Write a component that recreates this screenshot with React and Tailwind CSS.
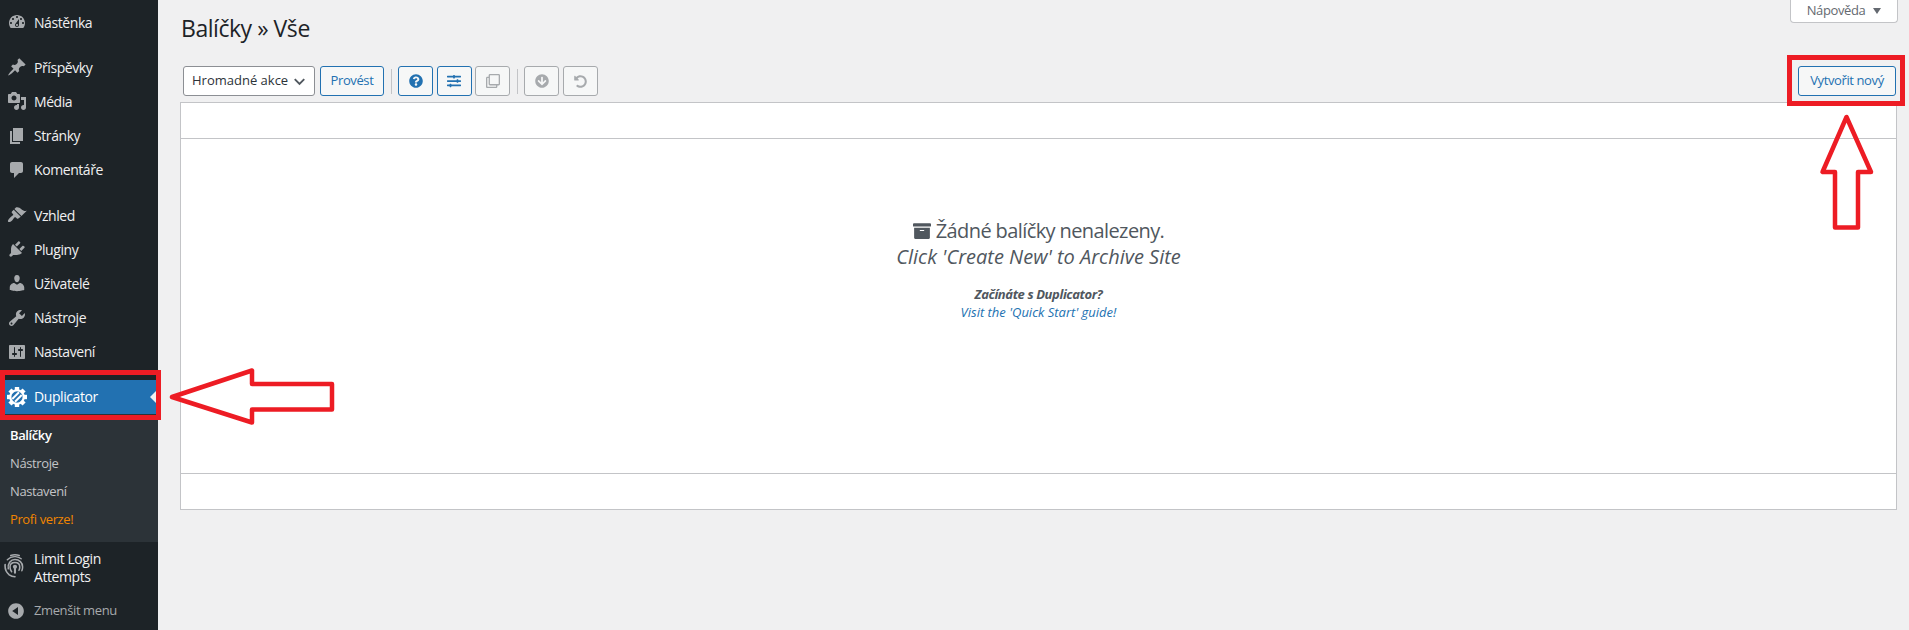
import React from "react";
import { FaQuestionCircle, FaSlidersH, FaRegClone, FaArrowCircleDown, FaUndoAlt, FaArchive } from "react-icons/fa";

const P = {
  dashboard: "M3.76 16h12.48c1.1-1.37 1.76-3.11 1.76-5 0-4.42-3.58-8-8-8s-8 3.58-8 8c0 1.89.66 3.63 1.76 5zM10 4c.55 0 1 .45 1 1s-.45 1-1 1-1-.45-1-1 .45-1 1-1zM6 6c.55 0 1 .45 1 1s-.45 1-1 1-1-.45-1-1 .45-1 1-1zm8 0c.55 0 1 .45 1 1s-.45 1-1 1-1-.45-1-1 .45-1 1-1zm-5.37 5.55L12 7v6c0 1.1-.9 2-2 2s-2-.9-2-2c0-.57.24-1.08.63-1.45zM4 10c.55 0 1 .45 1 1s-.45 1-1 1-1-.45-1-1 .45-1 1-1zm12 0c.55 0 1 .45 1 1s-.45 1-1 1-1-.45-1-1 .45-1 1-1zm-5 3c0-.55-.45-1-1-1s-1 .45-1 1 .45 1 1 1 1-.45 1-1z",
  post: "M10.44 3.02l1.82-1.82 6.36 6.35-1.83 1.82c-1.05-.68-2.48-.57-3.41.36l-.75.75c-.92.93-1.04 2.35-.35 3.41l-1.83 1.82-2.41-2.41-2.8 2.79c-.42.42-3.38 2.71-3.8 2.29s1.86-3.39 2.28-3.81l2.79-2.79L4.1 9.36l1.83-1.82c1.05.69 2.48.57 3.4-.36l.75-.75c.93-.92 1.05-2.35.36-3.41z",
  media: "M13 11V4c0-.55-.45-1-1-1h-1.67L9 1H5L3.67 3H2c-.55 0-1 .45-1 1v7c0 .55.45 1 1 1h10c.55 0 1-.45 1-1zM7 4.5c1.38 0 2.5 1.12 2.5 2.5S8.38 9.5 7 9.5 4.5 8.38 4.5 7 5.62 4.5 7 4.5zM14 6h5v10.5c0 1.38-1.12 2.5-2.5 2.5S14 17.88 14 16.5s1.12-2.5 2.5-2.5c.17 0 .34.02.5.05V9h-3V6zm-4 8.05V13h2v3.5c0 1.38-1.12 2.5-2.5 2.5S7 17.88 7 16.5 8.12 14 9.5 14c.17 0 .34.02.5.05z",
  page: "M6 15V2h10v13H6zm-1 1h8v2H3V5h2v11z",
  comments: "M5 2h9c1.1 0 2 .9 2 2v7c0 1.1-.9 2-2 2h-2l-5 5v-5H5c-1.1 0-2-.9-2-2V4c0-1.1.9-2 2-2z",
  appearance: "M14.48 11.06L7.41 3.99l1.5-1.5c.5-.56 2.3-.47 3.51.32 1.21.8 1.43 1.28 2.91 2.1 1.18.64 2.45 1.26 4.45.85zM13.77 11.77 6.7 4.7 4.93 6.47c-.39.39-.39 1.02 0 1.41l1.06 1.06c.39.39.39 1.03 0 1.42-.6.6-1.43 1.11-2.21 1.69-.35.26-.7.53-1.01.84-1.34 1.34-2.37 3.09-1.67 3.79.7.7 2.45.33 3.79-1.01.31-.31.58-.66.84-1.01.58-.78 1.09-1.61 1.69-2.21.39-.39 1.03-.39 1.42 0l1.06 1.06c.39.39 1.02.39 1.41 0z",
  plugins: "M13.11 4.36L9.87 7.6 8 5.73l3.24-3.24c.35-.34 1.05-.2 1.56.32.52.51.66 1.21.31 1.55zm-8 1.77l.91-1.12 9.01 9.01-1.19.84c-.71.71-2.63 1.16-3.82 1.16H6.14L4.9 17.26c-.59.59-1.54.59-2.12 0-.59-.58-.59-1.53 0-2.12l1.24-1.24v-3.88c0-1.13.4-3.19 1.09-3.89zm7.26 3.97l3.24-3.24c.34-.35 1.04-.21 1.55.31.52.51.66 1.21.31 1.55l-3.24 3.25z",
  users: "M10 9.25c-2.27 0-2.73-3.44-2.73-3.44C7 4.02 7.82 2 9.97 2c2.16 0 2.98 2.02 2.71 3.81 0 0-.41 3.44-2.68 3.44zm0 2.57L12.72 10c2.39 0 4.52 2.33 4.52 4.53v2.49s-3.65 1.13-7.24 1.13c-3.65 0-7.24-1.13-7.24-1.13v-2.49c0-2.25 1.94-4.48 4.47-4.48z",
  tools: "M16.68 9.77c-1.34 1.34-3.3 1.67-4.95.99l-5.41 6.52c-.99.99-2.59.99-3.58 0s-.99-2.59 0-3.57l6.52-5.42c-.68-1.65-.35-3.61.99-4.95 1.28-1.28 3.12-1.62 4.72-1.06l-2.89 2.89 2.82 2.82 2.86-2.87c.53 1.58.18 3.39-1.08 4.65zM3.81 16.21c.4.39 1.04.39 1.43 0 .4-.4.4-1.04 0-1.43-.39-.4-1.03-.4-1.43 0-.39.39-.39 1.03 0 1.43z",
  settings: "M18 16V4c0-.55-.45-1-1-1H3c-.55 0-1 .45-1 1v12c0 .55.45 1 1 1h14c.55 0 1-.45 1-1zM8 11h1c.55 0 1 .45 1 1s-.45 1-1 1H8v1.5c0 .28-.22.5-.5.5s-.5-.22-.5-.5V13H6c-.55 0-1-.45-1-1s.45-1 1-1h1V5.5c0-.28.22-.5.5-.5s.5.22.5.5V11zm5-2h-1c-.55 0-1-.45-1-1s.45-1 1-1h1V5.5c0-.28.22-.5.5-.5s.5.22.5.5V7h1c.55 0 1 .45 1 1s-.45 1-1 1h-1v5.5c0 .28-.22.5-.5.5s-.5-.22-.5-.5V9z",
  collapse: "M10 2.16c4.33 0 7.84 3.51 7.84 7.84s-3.51 7.84-7.84 7.84S2.16 14.33 2.16 10 5.71 2.16 10 2.16zm2 11.72V6.12L6.18 9.97z",
};

function Dash({ d }) {
  return (
    <svg viewBox="0 0 20 20" className="w-5 h-5 fill-[#a7aaad] shrink-0">
      <path d={d} />
    </svg>
  );
}

function Gear() {
  const teeth = [0, 45, 90, 135, 180, 225, 270, 315];
  return (
    <svg viewBox="0 0 22 22" className="w-[20px] h-[20px] shrink-0">
      {teeth.map((a) => (
        <rect key={a} x="8.6" y="0" width="4.8" height="4.5" fill="#fff" transform={`rotate(${a} 11 11)`} />
      ))}
      <circle cx="11" cy="11" r="7.4" fill="none" stroke="#fff" strokeWidth="2.4" />
      <path d="M5.8 13.2 13.2 5.800M8.800 16.200 16.200 8.800" stroke="#fff" strokeWidth="2.2" />
    </svg>
  );
}

function Finger() {
  return (
    <svg viewBox="0 0 22 26" className="w-[21px] h-[25px] shrink-0" fill="none" stroke="#a7aaad" strokeLinecap="round">
      <path d="M7 2.500C10 1.500 13 1.500 16 2.500" strokeWidth="1.500" />
      <path d="M3.500 7C6 4.500 9 3.500 12 3.700c2.500.2 4.500 1 6 2.300" strokeWidth="1.500" />
      <path d="M1.200 12C.8 16 2 20 5.500 22.800c1.500 1 3.500 1.800 6 2" strokeWidth="1.700" />
      <path d="M4.500 16.500C3.500 11 7 6.700 11.500 6.700S19.500 10 19.500 14.500c0 1.500-.3 2.800-.8 4" strokeWidth="1.600" />
      <path d="M8 19.500c-1.200-1.500-1.700-3-1.700-5 0-3 2.200-4.700 5.200-4.700s5 2 5 4.700c0 1.300-.3 2.500-.8 3.500" strokeWidth="1.600" />
      <circle cx="11.500" cy="14.300" r="2.200" fill="#a7aaad" stroke="none" />
      <path d="M11.500 15v5.500" strokeWidth="2.200" />
    </svg>
  );
}

function MenuItem({ icon, label, mt }) {
  return (
    <div className={`flex items-center h-[34.2px] ${mt || ""}`}>
      <div className="w-[34px] pl-[7px] flex items-center shrink-0">
        <Dash d={icon} />
      </div>
      <span className="text-[#f0f0f1] text-[14px] tracking-[-0.03em]">{label}</span>
    </div>
  );
}

function SubItem({ label, cls }) {
  return <div className={`h-[28px] flex items-center pl-[10px] text-[13px] tracking-[-0.03em] ${cls}`}>{label}</div>;
}

function IconBtn({ active, children }) {
  return (
    <div className={`w-[35px] h-[30px] rounded-[3px] border flex items-center justify-center bg-[#f6f7f7] ${active ? "border-[#2271b1] text-[#2271b1]" : "border-[#a7aaad] text-[#a7aaad]"}`}>
      {children}
    </div>
  );
}

function Sep({ cls }) {
  return <div className={`w-[1px] h-[25px] bg-[#c3c4c7] ${cls}`} />;
}

export default function App() {
  return (
    <div className="relative flex w-[1909px] h-[630px] overflow-hidden bg-[#f0f0f1] font-['Open_Sans',sans-serif]">
      <aside className="w-[158px] shrink-0 bg-[#1d2327] flex flex-col pt-[5px]">
        <MenuItem icon={P.dashboard} label="Nástěnka" />
        <MenuItem icon={P.post} label="Příspěvky" mt="mt-[11px]" />
        <MenuItem icon={P.media} label="Média" />
        <MenuItem icon={P.page} label="Stránky" />
        <MenuItem icon={P.comments} label="Komentáře" />
        <MenuItem icon={P.appearance} label="Vzhled" mt="mt-[11px]" />
        <MenuItem icon={P.plugins} label="Pluginy" />
        <MenuItem icon={P.users} label="Uživatelé" />
        <MenuItem icon={P.tools} label="Nástroje" />
        <MenuItem icon={P.settings} label="Nastavení" />
        <div className="relative flex items-center h-[34.2px] mt-[11px] bg-[#2271b1]">
          <div className="w-[34px] pl-[7px] flex items-center shrink-0">
            <Gear />
          </div>
          <span className="text-white text-[14px] tracking-[-0.03em]">Duplicator</span>
          <span className="absolute right-0 top-[9px] w-0 h-0 border-y-[8px] border-y-transparent border-r-[8px] border-r-[#f0f0f1]" />
        </div>
        <div className="bg-[#2c3338] pt-[8px] pb-[8px]">
          <SubItem label="Balíčky" cls="text-white font-semibold" />
          <SubItem label="Nástroje" cls="text-[#c3c4c7]" />
          <SubItem label="Nastavení" cls="text-[#c3c4c7]" />
          <SubItem label="Profi verze!" cls="text-[#f18500]" />
        </div>
        <div className="flex items-start pt-[8px] h-[45px]">
          <div className="w-[34px] pl-[4px] pt-[3px] shrink-0">
            <Finger />
          </div>
          <span className="text-[#f0f0f1] text-[14px] leading-[18.2px] tracking-[-0.03em]">Limit Login<br />Attempts</span>
        </div>
        <div className="flex items-center h-[34px] mt-[7px]">
          <div className="w-[34px] pl-[6px] shrink-0">
            <Dash d={P.collapse} />
          </div>
          <span className="text-[#a7aaad] text-[13px] tracking-[-0.03em]">Zmenšit menu</span>
        </div>
      </aside>

      <main className="flex-1 min-w-0 pl-[22px] pr-[12px] flex flex-col">
        <header className="flex justify-between items-start h-[66px]">
          <h1 className="pl-px pt-[11px] text-[#1d2327] text-[23px] leading-[34px] tracking-[-0.02em]">Balíčky » Vše</h1>
          <div className="flex items-center justify-center gap-[8px] w-[108px] h-[23px] bg-white border border-t-0 border-[#c3c4c7] rounded-b-[4px] text-[#646970] text-[13px] tracking-[-0.03em] mr-[-1px]">
            <span>Nápověda</span>
            <span className="w-0 h-0 border-x-[4px] border-x-transparent border-t-[6px] border-t-[#646970]" />
          </div>
        </header>

        <div className="flex items-center h-[30px] pl-[3px] pr-[1px] text-[13px] tracking-[-0.03em]">
          <div className="w-[132px] h-[30px] rounded-[3px] border border-[#8c8f94] bg-white text-[#2c3338] flex items-center justify-between pl-[8px] pr-[5px] tracking-normal">
            <span>Hromadné akce</span>
            <svg viewBox="0 0 20 20" className="w-[19px] h-[19px] fill-none stroke-[#50575e] stroke-2">
              <path d="M5 7.500 10 12.500 15 7.500" />
            </svg>
          </div>
          <div className="ml-[5px] w-[64px] h-[30px] rounded-[3px] border border-[#2271b1] bg-[#f6f7f7] text-[#2271b1] flex items-center justify-center">Provést</div>
          <Sep cls="ml-[7px]" />
          <div className="ml-[6px] flex gap-[3.5px]">
            <IconBtn active><FaQuestionCircle className="w-[14px] h-[14px]" /></IconBtn>
            <IconBtn active><FaSlidersH className="w-[14px] h-[14px]" /></IconBtn>
            <IconBtn><FaRegClone className="w-[14px] h-[14px]" /></IconBtn>
          </div>
          <Sep cls="ml-[7px]" />
          <div className="ml-[6px] flex gap-[3.5px]">
            <IconBtn><FaArrowCircleDown className="w-[14px] h-[14px]" /></IconBtn>
            <IconBtn><FaUndoAlt className="w-[13px] h-[13px]" /></IconBtn>
          </div>
          <div className="ml-auto w-[98px] h-[30px] rounded-[3px] border border-[#2271b1] bg-[#f6f7f7] text-[#2271b1] flex items-center justify-center">Vytvořit nový</div>
        </div>

        <section className="mt-[6px] h-[408px] bg-white border border-[#c3c4c7] flex flex-col">
          <div className="h-[36px] border-b border-[#c3c4c7]" />
          <div className="flex-1 flex flex-col items-center pt-[79px] text-center">
            <div className="flex items-center gap-[5px] text-[20px] leading-[26px] text-[#50575e] tracking-[-0.03em]">
              <FaArchive className="w-[18px] h-[18px] text-[#50575e]" />
              <span>Žádné balíčky nenalezeny.</span>
            </div>
            <div className="text-[20px] leading-[26px] italic text-[#50575e]">Click 'Create New' to Archive Site</div>
            <div className="mt-[15px] text-[13px] leading-[18px] italic font-bold text-[#50575e] tracking-[-0.03em]">Začínáte s Duplicator?</div>
            <div className="text-[13px] leading-[18px] italic text-[#2271b1]">Visit the 'Quick Start' guide!</div>
          </div>
          <div className="h-[36px] border-t border-[#c3c4c7]" />
        </section>
      </main>

      <div className="absolute left-0 top-[370px] w-[161px] h-[50px] border-[5px] border-[#ed1c24]" />
      <div className="absolute left-[1787px] top-[55px] w-[118px] h-[51px] border-[5px] border-[#ed1c24]" />
      <svg className="absolute left-0 top-0 pointer-events-none" width="1909" height="630" fill="none" stroke="#ed1c24" strokeWidth="4.500" strokeLinejoin="round">
        <path d="M172 397 252 370.500V384H332V409.500H252V422.500Z" />
        <path d="M1846.500 117 1822.500 172H1835V227.500H1858V172H1871Z" />
      </svg>
    </div>
  );
}
